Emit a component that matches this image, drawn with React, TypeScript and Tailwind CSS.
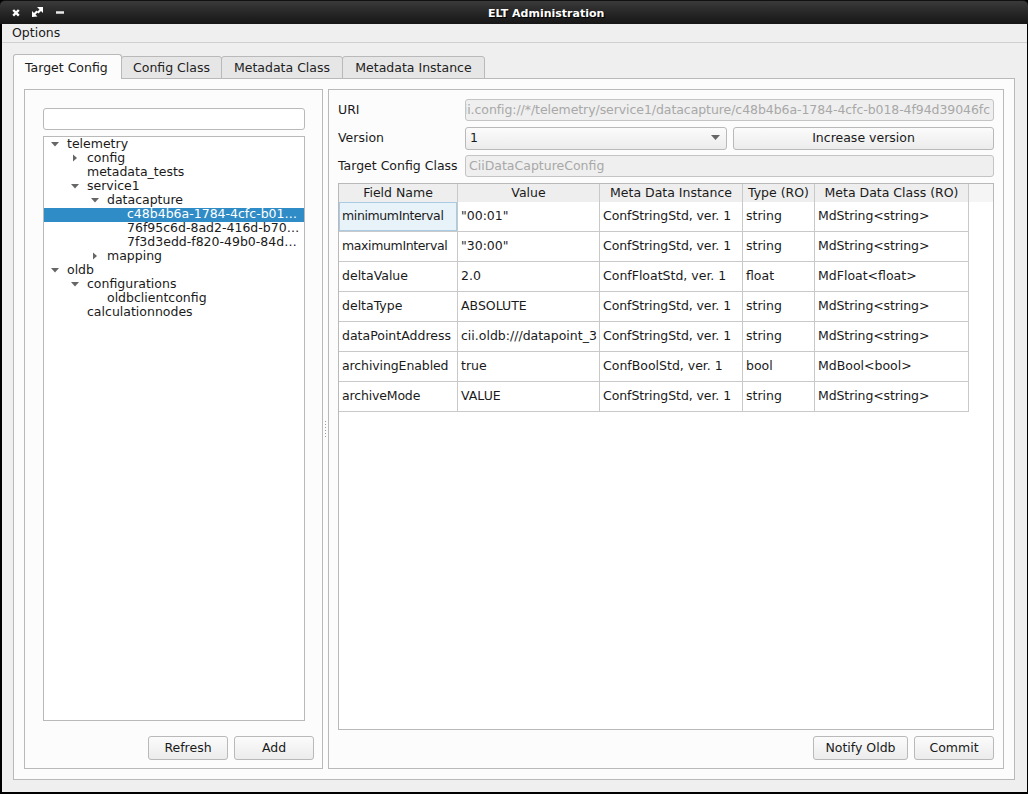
const FONT = "font-['DejaVu_Sans',sans-serif]";

const tree: { t: string; d: number; a?: "d" | "r"; sel?: boolean }[] = [
  { t: "telemetry", d: 0, a: "d" },
  { t: "config", d: 1, a: "r" },
  { t: "metadata_tests", d: 1 },
  { t: "service1", d: 1, a: "d" },
  { t: "datacapture", d: 2, a: "d" },
  { t: "c48b4b6a-1784-4cfc-b01…", d: 3, sel: true },
  { t: "76f95c6d-8ad2-416d-b70…", d: 3 },
  { t: "7f3d3edd-f820-49b0-84d…", d: 3 },
  { t: "mapping", d: 2, a: "r" },
  { t: "oldb", d: 0, a: "d" },
  { t: "configurations", d: 1, a: "d" },
  { t: "oldbclientconfig", d: 2 },
  { t: "calculationnodes", d: 1 },
];

const rows = [
  ["minimumInterval", '"00:01"', "ConfStringStd, ver. 1", "string", "MdString<string>"],
  ["maximumInterval", '"30:00"', "ConfStringStd, ver. 1", "string", "MdString<string>"],
  ["deltaValue", "2.0", "ConfFloatStd, ver. 1", "float", "MdFloat<float>"],
  ["deltaType", "ABSOLUTE", "ConfStringStd, ver. 1", "string", "MdString<string>"],
  ["dataPointAddress", "cii.oldb:///datapoint_3", "ConfStringStd, ver. 1", "string", "MdString<string>"],
  ["archivingEnabled", "true", "ConfBoolStd, ver. 1", "bool", "MdBool<bool>"],
  ["archiveMode", "VALUE", "ConfStringStd, ver. 1", "string", "MdString<string>"],
];

const tight: Record<string, string> = {
  minimumInterval: "tracking-[-0.38px]",
  maximumInterval: "tracking-[-0.37px]",
  archivingEnabled: "tracking-[-0.1px]",
  archiveMode: "tracking-[-0.16px]",
  "ConfStringStd, ver. 1": "tracking-[-0.08px]",
  "MdString<string>": "tracking-[-0.1px]",
};

const heads = ["Field Name", "Value", "Meta Data Instance", "Type (RO)", "Meta Data Class (RO)"];
const widths = [119, 142, 143, 72, 154];

function Arrow({ dir }: { dir: "d" | "r" }) {
  return (
    <svg width="10" height="8" viewBox="0 0 10 8" className="block">
      {dir === "d" ? <path d="M1 2h8L5 6.500z" fill="#666" /> : <path d="M3 0.500v7L7 4z" fill="#666" />}
    </svg>
  );
}

function Btn({ w, children }: { w: string; children: string }) {
  return (
    <button className={`${w} h-6 shrink-0 rounded-[3px] border border-[#b9b9b9] bg-gradient-to-b from-[#fbfbfb] to-[#ececec] text-[12.5px] text-[#1a1a1a]`}>
      {children}
    </button>
  );
}

export default function App() {
  return (
    <div className={`${FONT} w-[1028px] h-[794px] flex flex-col overflow-hidden bg-black text-[12.5px] leading-[14px] text-[#1a1a1a]`}>
      <div className="h-6 shrink-0 rounded-t-[5px] border-t border-[#111] bg-gradient-to-b from-[#3a3a3a] to-[#161616] flex items-center pl-[10px]">
        <svg width="60" height="24" viewBox="0 1 60 24" className="block shrink-0">
          <path d="M3.200 10l5.600 5.600M8.800 10l-5.600 5.600" stroke="#fff" strokeWidth="2.400" fill="none" />
          <path d="M27 7h6v6l-2-2-2.500 2.500-1.500-1.500 2.500-2.500zM22 17v-6l2 2 2.500-2.500 1.500 1.500-2.500 2.500 2 2z" fill="#fff" />
          <path d="M46 12.500h8" stroke="#e8e8e8" strokeWidth="2.500" />
        </svg>
        <div className="ml-[418px] pt-[2px] text-[11px] font-bold text-white whitespace-nowrap [text-shadow:1px_1px_1px_#000]">ELT Administration</div>
      </div>
      <div className="flex-1 min-h-0 mx-[1.5px] mb-[2px] bg-[#efefef] flex flex-col">
        <div className="h-[19px] shrink-0 border-b border-[#d0d0d0] pl-[10.5px] pt-[2px]">Options</div>
        <div className="pt-[11px] px-[11.5px] flex-1 min-h-0 flex flex-col">
          <div className="flex items-end h-[25px] shrink-0 relative z-10">
            <div className="w-[109px] h-[25px] relative z-10 bg-[#fcfcfc] border border-b-0 border-[#b9b9b9] rounded-t-[3px] pl-[11px] pt-[6px]">Target Config</div>
            {[["w-[101px]", "Config Class"], ["w-[122px]", "Metadata Class"], ["w-[143px]", "Metadata Instance"]].map(([w, t]) => (
              <div key={t} className={`${w} h-[23px] -ml-px bg-[#e6e6e6] border border-[#b9b9b9] rounded-t-[3px] text-center pt-[4px] text-[#222]`}>{t}</div>
            ))}
          </div>
          <div className="-mt-px w-[1002px] h-[702px] shrink-0 bg-[#fcfcfc] border border-[#b9b9b9] p-[10px] flex">
            {/* left panel */}
            <div className="w-[299px] shrink-0 border border-[#b9b9b9] flex flex-col pl-[18px] pt-[18px]">
              <div className="w-[262px] h-[22px] shrink-0 rounded-[3px] border border-[#b9b9b9] bg-white" />
              <div className="w-[262px] h-[585px] mt-[6px] shrink-0 border border-[#b9b9b9] bg-white">
                <div className="h-px" />
                {tree.map((n) => (
                  <div key={n.t} className={`h-[14px] pb-[2px] flex items-center whitespace-nowrap ${n.sel ? "bg-[#308cc6] text-white" : ""}`}>
                    <div className="shrink-0 flex justify-end" style={{ width: 16 + n.d * 20 }}>
                      {n.a && <Arrow dir={n.a} />}
                    </div>
                    <div className="pl-[7px]">{n.t}</div>
                  </div>
                ))}
              </div>
              <div className="mt-[15px] flex justify-end gap-[6px] pr-[8px]">
                <Btn w="w-[80px]">Refresh</Btn>
                <Btn w="w-[80px]">Add</Btn>
              </div>
            </div>
            {/* splitter */}
            <div className="w-[5px] shrink-0 flex flex-col items-center justify-center gap-[2px]">
              {[0, 1, 2, 3, 4, 5].map((i) => (
                <div key={i} className="w-px h-px bg-[#999]" />
              ))}
            </div>
            {/* right panel */}
            <div className="w-[676px] shrink-0 border border-[#b9b9b9] pl-[9px] pr-[9px] pt-[9px] flex flex-col">
              <div className="flex items-center h-[22px] shrink-0">
                <div className="w-[127px] shrink-0">URI</div>
                <div className="w-[529px] h-[22px] rounded-[3px] border border-[#c4c4c4] bg-[#efefef] text-[#a8a8a8] tracking-[-0.07px] flex items-center justify-end overflow-hidden whitespace-nowrap pr-[3px]">
                  <span>cii.config://*/telemetry/service1/datacapture/c48b4b6a-1784-4cfc-b018-4f94d39046fc</span>
                </div>
              </div>
              <div className="flex items-center h-[23px] mt-[6px] shrink-0">
                <div className="w-[127px] shrink-0 pb-[2px]">Version</div>
                <div className="w-[262px] h-[23px] pb-[2px] rounded-[3px] border border-[#b9b9b9] bg-gradient-to-b from-[#fbfbfb] to-[#ececec] flex items-center justify-between pl-[4px] pr-[6px]">
                  <span>1</span>
                  <svg width="9" height="5" viewBox="0 0 9 5"><path d="M0 0h9L4.500 5z" fill="#666" /></svg>
                </div>
                <button className="w-[261px] h-[23px] pb-[2px] ml-[6px] rounded-[3px] border border-[#b9b9b9] bg-gradient-to-b from-[#fbfbfb] to-[#ececec] text-[12.5px] text-[#1a1a1a]">Increase version</button>
              </div>
              <div className="flex items-center h-[22px] mt-[5px] shrink-0">
                <div className="w-[127px] shrink-0 whitespace-nowrap">Target Config Class</div>
                <div className="w-[529px] h-[22px] rounded-[3px] border border-[#c4c4c4] bg-[#efefef] text-[#a8a8a8] flex items-center pl-[3px]">CiiDataCaptureConfig</div>
              </div>
              <div className="w-[656px] h-[547px] mt-[6px] shrink-0 border border-[#b9b9b9] bg-white">
                <div className="flex h-[18px] bg-[#f5f5f5]">
                  {heads.map((h, i) => (
                    <div key={h} style={{ width: widths[i] }} className="shrink-0 bg-[#eeeeee] flex items-center justify-center border-r border-[#c9c9c9] whitespace-nowrap">{h}</div>
                  ))}
                </div>
                {rows.map((r, ri) => (
                  <div key={ri} className="flex">
                    {r.map((c, i) => (
                      <div
                        key={i}
                        style={{ width: widths[i] }}
                        className={`h-[30px] pb-[2px] shrink-0 flex items-center pl-[3px] whitespace-nowrap border-r border-b border-[#c9c9c9] ${tight[c] ?? ""} ${ri === 0 && i === 0 ? "bg-[#e8f2f9] shadow-[inset_0_0_0_1px_#a9cbe3]" : ""}`}
                      >
                        {c}
                      </div>
                    ))}
                  </div>
                ))}
              </div>
              <div className="mt-[6px] flex justify-end gap-[6px]">
                <Btn w="w-[95px]">Notify Oldb</Btn>
                <Btn w="w-[80px]">Commit</Btn>
              </div>
            </div>
          </div>
        </div>
      </div>
    </div>
  );
}
